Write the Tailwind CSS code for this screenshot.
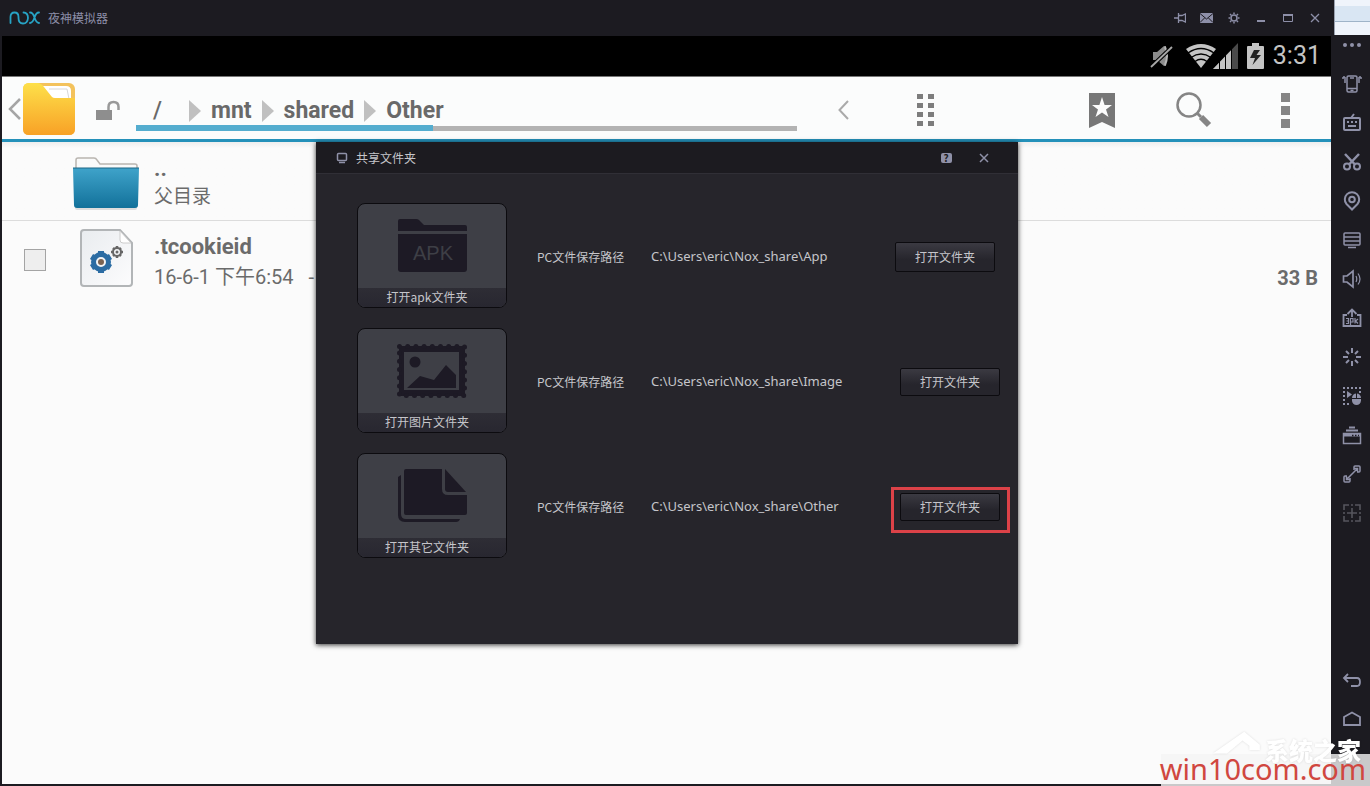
<!DOCTYPE html>
<html lang="zh-CN">
<head>
<meta charset="utf-8">
<meta name="viewport" content="width=device-width, initial-scale=1">
<title>夜神模拟器</title>
<script src="https://cdn.jsdelivr.net/npm/@tailwindcss/browser@4"></script>
</head>
<body class="bg-[#1c1b21] font-['Roboto','Noto_Sans_CJK_SC',sans-serif]">
<div class="relative flex h-screen flex-col overflow-hidden">

  <!-- Emulator title bar -->
  <header class="flex h-9 shrink-0">
    <div class="flex flex-1 items-center bg-[#1c1b21] pl-[9px] pr-[6px] text-[#8d8fa8]">
      <svg class="h-[14px] w-8" viewBox="0 0 32 14" fill="none" stroke="#27a3c4" stroke-width="1.8" stroke-linecap="round"><path d="M1.500 12V6Q1.500 1.500 5.500 1.500T9.500 6V7Q9.500 12.500 14 12.500T19 7Q19 1.500 14.500 1.500"/><path d="M21 1.500Q24 1.500 25.500 6.500T30 12M30 1.500Q27 1.500 25.500 6.500T21 12"/></svg>
      <h1 class="ml-[7px] font-['Noto_Sans_CJK_SC',sans-serif] text-xs">夜神模拟器</h1>
      <div class="ml-auto flex">
        <button aria-label="置顶" class="flex h-9 w-[27px] items-center justify-center"><svg class="h-3 w-3" viewBox="0 0 12 12" fill="none" stroke="currentColor" stroke-width="1.300"><path d="M0 6H4M4.500 1V11M4.500 3.500H8L11.500 2V10L8 8.500H4.500"/></svg></button>
        <button aria-label="消息" class="flex h-9 w-[27px] items-center justify-center"><svg class="h-[10px] w-[13px]" viewBox="0 0 13 10"><path d="M0 0H13V10H0Z" fill="currentColor"/><path d="M0 .5L6.500 6L13 .5M0 9.500L4.500 5M13 9.500L8.500 5" stroke="#1c1b21" fill="none"/></svg></button>
        <button aria-label="设置" class="flex h-9 w-[27px] items-center justify-center"><svg class="h-3 w-3" viewBox="0 0 12 12" fill="none" stroke="currentColor"><circle cx="6" cy="6" r="3" stroke-width="1.500"/><path stroke-width="1.500" d="M6 .5V2M6 10V11.500M.5 6H2M10 6H11.500M2 2L3.200 3.200M8.800 8.800L10 10M2 10L3.200 8.800M8.800 3.200L10 2"/></svg></button>
        <button aria-label="最小化" class="flex h-9 w-[27px] items-center justify-center"><svg class="h-3 w-3" viewBox="0 0 12 12"><path d="M2 8H10V10H2Z" fill="currentColor"/></svg></button>
        <button aria-label="最大化" class="flex h-9 w-[27px] items-center justify-center"><svg class="h-3 w-3" viewBox="0 0 12 12" fill="none" stroke="currentColor"><path d="M1.500 3V9.500H10.500V3"/><path d="M1 3H11" stroke-width="2"/></svg></button>
        <button aria-label="关闭" class="flex h-9 w-[27px] items-center justify-center"><svg class="h-3 w-3" viewBox="0 0 12 12" stroke="currentColor" stroke-width="1.300"><path d="M2 2L10 10M10 2L2 10"/></svg></button>
      </div>
    </div>
    <div class="flex h-[35px] w-9 flex-col border-l border-gray-400 bg-[#eff4fb]">
      <div class="mt-[6px] h-4 border-b border-[#9fb4c8] bg-[#d9e6f3]"></div>
    </div>
  </header>

  <div class="flex min-h-0 flex-1">
    <main class="mb-[2px] ml-[2px] flex flex-1 flex-col bg-[#fbfbfb]">
      <!-- Android status bar -->
      <div class="flex h-[41px] shrink-0 items-center justify-end border-b border-[#777] bg-black pr-[10px] text-[#c4c4c4]">
        <svg class="h-7 w-6" viewBox="0 0 24 28"><path d="M3 10H7L14 4H16V24H14L7 18H3Z" fill="#8c8c8c"/><path d="M15 5Q19 14 15 23" stroke="#b5b5b5" stroke-width="2" fill="none"/><path d="M1 25L22 5" stroke="#000" stroke-width="4"/><path d="M1 25L22 5" stroke="#a8a8a8" stroke-width="1.800"/></svg>
        <svg class="ml-[11px] h-6 w-8" viewBox="0 0 32 24"><path d="M1 5Q16-5 31 5L16 24Z" fill="currentColor"/><path d="M3 9Q16 0 29 9M6 13.500Q16 6.500 26 13.500M10 17.500Q16 13 22 17.500" fill="none" stroke="#000" stroke-width="1.300"/></svg>
        <svg class="-ml-1 h-[26px] w-[25px]" viewBox="0 0 25 26"><path d="M0 26L25 0V26Z" fill="#4a4a4a"/><path d="M0 26L19 6.200V26Z" fill="currentColor"/><path d="M6.500 18V26M12.500 12V26M18.500 6V26" stroke="#000"/></svg>
        <svg class="ml-[9px] h-[26px] w-[17px]" viewBox="0 0 17 26"><path d="M5 0H12V3H16Q17 3 17 4V25Q17 26 16 26H1Q0 26 0 25V4Q0 3 1 3H5Z" fill="currentColor"/><path d="M7 7L3 15H8L5.500 22L14 12H9.500L13 7Z" fill="#222"/></svg>
        <time class="ml-[9px] text-[25px] leading-8">3:31</time>
      </div>

      <!-- File manager toolbar -->
      <div class="flex h-[65px] shrink-0 border-b-3 border-[#2491ba] bg-[#fbfcfc] text-[#7d7d7d]">
        <button aria-label="返回" class="flex w-[76px] shrink-0 items-center pl-[6px] pt-px">
          <svg class="h-6 w-[13px]" viewBox="0 0 13 24" fill="none" stroke="#a5a5a5" stroke-width="2.500"><path d="M12 2L2 12L12 22"/></svg>
          <svg class="ml-px h-[54px] w-[54px]" viewBox="0 0 54 54"><defs><linearGradient id="gold" x1="0" y1="0" x2="0" y2="1"><stop offset="0" stop-color="#fde04a"/><stop offset="1" stop-color="#f8a126"/></linearGradient></defs><rect x="1" y="1" width="52" height="52" rx="6" fill="#f3c25c"/><path d="M20 4H44Q49 4 49 9V18H20Z" fill="#fff"/><path d="M27 7H45L47 17" fill="none" stroke="#d8d8d8"/><path d="M1 7Q1 1 7 1H15Q19 1 22 5L30 15Q31 16 33 16H53V47Q53 53 47 53H7Q1 53 1 47Z" fill="url(#gold)"/></svg>
        </button>
        <button aria-label="解锁" class="flex w-[58px] shrink-0 items-center pl-[17px] pt-1"><svg class="h-[22px] w-[26px]" viewBox="0 0 26 22"><path d="M1 11H17V21H1Z" fill="#8e8e8e"/><path d="M13.500 11V8Q13.500 3 18.500 3T23.500 8V11" fill="none" stroke="#999" stroke-width="2.500"/></svg></button>
        <nav aria-label="路径" class="mb-2 flex min-w-0 flex-1 flex-col">
          <div class="flex flex-1 items-center pt-[19px] pl-[17px] text-[23px] leading-7 font-bold text-[#696969]">
            <a href="#" class="w-[36px] font-medium">/</a>
            <svg class="mr-[10px] h-6 w-3" viewBox="0 0 12 24"><path d="M0 1L12 12L0 23Z" fill="#c0c0c0"/></svg>
            <a href="#">mnt</a>
            <svg class="mx-[10px] h-6 w-3" viewBox="0 0 12 24"><path d="M0 1L12 12L0 23Z" fill="#c0c0c0"/></svg>
            <a href="#">shared</a>
            <svg class="mx-[10px] h-6 w-3" viewBox="0 0 12 24"><path d="M0 1L12 12L0 23Z" fill="#c0c0c0"/></svg>
            <a href="#">Other</a>
          </div>
          <div class="flex h-[6px] items-end"><div class="h-[6px] w-[45%] bg-[#54adcf]"></div><div class="h-[5px] flex-1 bg-[#b3b3b3]"></div></div>
        </nav>
        <button aria-label="上一个" class="flex w-[92px] shrink-0 items-center justify-center"><svg class="mt-1 h-5 w-[11px]" viewBox="0 0 11 20" fill="none" stroke="#aaa" stroke-width="2"><path d="M10 1L1.500 10L10 19"/></svg></button>
        <button aria-label="网格" class="flex w-[72px] shrink-0 items-center justify-center"><svg class="mt-1 h-8 w-[17px]" viewBox="0 0 17 32" fill="currentColor"><path d="M0 0H6V5H0ZM11 0H17V5H11ZM0 9H6V14H0ZM11 9H17V14H11ZM0 18H6V23H0ZM11 18H17V23H11ZM0 27H6V32H0ZM11 27H17V32H11Z"/></svg></button>
        <div class="w-[95px] shrink-0"></div>
        <button aria-label="书签" class="flex w-[92px] shrink-0 items-center justify-center"><svg class="mt-1 h-[35px] w-[26px]" viewBox="0 0 26 35"><path d="M0 0H26V35L13 29L0 35Z" fill="#777"/><path d="M13 4L15.600 12H23L17 16.500L19.500 24L13 19.500L6.500 24L9 16.500L3 12H10.400Z" fill="#fcfcfc"/></svg></button>
        <button aria-label="搜索" class="flex w-[92px] shrink-0 items-center justify-center"><svg class="mt-1 h-9 w-9" viewBox="0 0 36 36" fill="none" stroke="#858585"><circle cx="13" cy="13" r="11.500" stroke-width="2.500"/><path d="M21 21L25 25" stroke-width="3"/><path d="M25 25L33 33" stroke-width="6"/></svg></button>
        <button aria-label="更多" class="flex w-[91px] shrink-0 items-center justify-center"><svg class="mt-1 h-[35px] w-[9px]" viewBox="0 0 9 35" fill="#858585"><path d="M0 0H9V9H0ZM0 13H9V22H0ZM0 26H9V35H0Z"/></svg></button>
      </div>

      <!-- File list -->
      <ul class="text-[#6b6b6b]">
        <li class="flex h-[79px] items-start border-b border-[#dcdcdc] bg-linear-to-b from-[#eeeeee] to-[#fbfbfb] to-8%">
          <svg class="mt-[15px] ml-[70px] h-[54px] w-[68px] shrink-0" viewBox="0 0 68 54"><defs><linearGradient id="blue" x1="0" y1="0" x2="0" y2="1"><stop offset="0" stop-color="#3fa3ca"/><stop offset="1" stop-color="#12719a"/></linearGradient></defs><path d="M4 14V3Q4 1 6 1H22Q24 1 25 3L28 7H63Q65 7 65 9V14Z" fill="#fafafa" stroke="#b9b5b0" stroke-width="1.500"/><rect x="3" y="48" width="62" height="5" rx="2" fill="#ddd"/><path d="M1 11H67L66 48Q66 51 63 51H5Q2 51 2 48Z" fill="url(#blue)"/><path d="M1 11H67" stroke="#1c6685"/></svg>
          <div class="ml-[14px] mt-[13px]">
            <p class="text-[22px] leading-7 font-bold">..</p>
            <p class="text-[19px] leading-7">父目录</p>
          </div>
        </li>
        <li class="flex h-20 items-start">
          <input type="checkbox" aria-label="选择 .tcookieid" class="mt-7 ml-[22px] size-[22px] shrink-0 appearance-none border border-[#a4a4a4] bg-[#eee]">
          <svg class="mt-2 ml-[34px] h-[58px] w-[54px] shrink-0" viewBox="0 0 54 58"><defs><linearGradient id="paper" x1="0" y1="0" x2="1" y2="1"><stop offset="0" stop-color="#e9ecef"/><stop offset="1" stop-color="#fcfcfd"/></linearGradient></defs><path d="M4 1H40L52 14V54Q52 57 49 57H4Q1 57 1 54V4Q1 1 4 1Z" fill="url(#paper)" stroke="#b2b5b7" stroke-width="2"/><path d="M40 2V11Q40 14 43 14H51Z" fill="#fff" stroke="#ccc"/><g stroke="#2b6ca3"><circle cx="21" cy="33" r="7.500" fill="none" stroke-width="5"/><path stroke-width="6" d="M21 22V25M21 41V44M11.500 27.500L14 29M28 37L30.500 38.500M11.500 38.500L14 37M28 29L30.500 27.500"/></g><circle cx="21" cy="33" r="3" fill="#7a6352"/><g stroke="#666" fill="none"><circle cx="37" cy="23" r="4" stroke-width="2"/><path stroke-width="2.500" d="M37 17V19M37 27V29M31 23H33M41 23H43M33 19L34.500 20.500M39.500 25.500L41 27M33 27L34.500 25.500M39.500 20.500L41 19"/></g><circle cx="37" cy="23" r="1.500" fill="#666"/></svg>
          <div class="ml-[20px] mt-3">
            <p class="text-[22px] leading-7 font-bold">.tcookieid</p>
            <p class="mt-[2px] text-xl leading-7 whitespace-pre">16-6-1 下午6:54   -</p>
          </div>
          <span class="mt-[43px] mr-[13px] ml-auto text-xl leading-7 font-bold">33 B</span>
        </li>
      </ul>
    </main>

    <!-- Side toolbar -->
    <aside class="flex w-[39px] shrink-0 flex-col bg-[#1c1b21] pl-[2px] text-[#8f91a8]">
      <button aria-label="更多" class="flex h-7 items-start justify-center pt-[7px]"><svg class="h-1 w-[18px]" viewBox="0 0 18 4" fill="currentColor"><circle cx="2" cy="2" r="2"/><circle cx="9" cy="2" r="2"/><circle cx="16" cy="2" r="2"/></svg></button>
      <button aria-label="摇一摇" class="flex h-[39px] items-center justify-center"><svg class="size-5" viewBox="0 0 20 20" fill="none" stroke="currentColor" stroke-width="1.500"><rect x="5" y="2" width="10" height="16" rx="1.500"/><path d="M5 14.500H15M8 4H12M8.500 16.500H11.500M3 3V9M17 3V9M1 3V5M19 3V5M1 3H3M17 3H19"/></svg></button>
      <button aria-label="键盘" class="flex h-[39px] items-center justify-center"><svg class="size-5" viewBox="0 0 20 20" fill="none" stroke="currentColor" stroke-width="2"><rect x="2" y="5" width="16" height="12" rx="1"/><path d="M9 5L12 1M5 9H7M9 9H11M13 9H15M6 13H14"/></svg></button>
      <button aria-label="剪切" class="flex h-[39px] items-center justify-center"><svg class="size-5" viewBox="0 0 20 20" fill="none" stroke="currentColor" stroke-width="2"><circle cx="5" cy="14.500" r="3"/><circle cx="15" cy="14.500" r="3"/><path d="M3 2L12.500 12M17 2L7.500 12" stroke-width="2.500"/></svg></button>
      <button aria-label="定位" class="flex h-[39px] items-center justify-center"><svg class="size-5" viewBox="0 0 20 20" fill="none" stroke="currentColor" stroke-width="2"><path d="M10 18.500L4.500 13A7.200 7.200 0 1 1 15.500 13Z"/><circle cx="10" cy="8.500" r="2.800"/></svg></button>
      <button aria-label="显示" class="flex h-[39px] items-center justify-center"><svg class="size-5" viewBox="0 0 20 20" fill="none" stroke="currentColor" stroke-width="1.500"><rect x="2" y="3" width="16" height="12" rx="1"/><path d="M2 7H18M2 11H18M6 17.500H14"/></svg></button>
      <button aria-label="音量" class="flex h-[39px] items-center justify-center"><svg class="size-5" viewBox="0 0 20 20" fill="none" stroke="currentColor" stroke-width="1.700"><path d="M1.500 7H5L11 2V18L5 13H1.500Z"/><path d="M14 7Q15.500 10 14 13M16 4.500Q20 10 16 15.500" stroke-width="1.200"/></svg></button>
      <button aria-label="安装 apk" class="flex h-[39px] items-center justify-center"><svg class="size-5" viewBox="0 0 20 20" fill="none" stroke="currentColor" stroke-width="1.800"><path d="M5 7H1.500V18H18.500V7H15M10 9V2M5.500 6L10 1.500L14.500 6"/><path stroke-width="1.200" d="M4 10.500H6.500V15.500H4M4.500 13H6.500M8.500 17V10.500H11V14H8.500M13 10V15.500M16 11L13.500 13L16 15.500"/></svg></button>
      <button aria-label="加载" class="flex h-[39px] items-center justify-center"><svg class="size-5" viewBox="0 0 20 20" stroke="currentColor" stroke-width="2"><path d="M10 1V6M10 14V19M1 10H6M14 10H19M4 4L7 7M13 13L16 16M4 16L7 13M13 7L16 4"/></svg></button>
      <button aria-label="录制脚本" class="flex h-[39px] items-center justify-center"><svg class="size-5" viewBox="0 0 20 20"><path d="M1 2H19M2 5V19M5 18H8M18 5V8" fill="none" stroke="currentColor" stroke-width="2" stroke-dasharray="2 2"/><path d="M5 5L10 8.500L5 12Z" fill="currentColor"/><path d="M10 12A4.500 4.500 0 0 1 19 12V14.500A4.500 4.500 0 0 1 10 14.500Z" fill="currentColor"/><path d="M10 12.500H19M14.500 7V12.500" stroke="#1c1b21"/></svg></button>
      <button aria-label="多开" class="flex h-[39px] items-center justify-center"><svg class="size-5" viewBox="0 0 20 20" fill="none" stroke="currentColor" stroke-width="1.500"><rect x="1.500" y="8.500" width="17" height="10"/><path d="M2 10H18" stroke-width="3"/><path d="M4 5.500H16M7 2.500H13" stroke-width="1.800"/><path d="M10 10.500H17" stroke="#1c1b21" stroke-dasharray="1.500 1.500"/></svg></button>
      <button aria-label="全屏" class="flex h-[39px] items-center justify-center"><svg class="size-5" viewBox="0 0 20 20" fill="none" stroke="currentColor" stroke-width="1.500"><path d="M12 6V3Q12 2 13 2H17Q18 2 18 3V7Q18 8 17 8H15M8 14V17Q8 18 7 18H3Q2 18 2 17V13Q2 12 3 12H5M4.500 15.500L15.500 4.500M12.500 4.500H15.500V7.500M4.500 12.500V15.500H7.500"/></svg></button>
      <button aria-label="添加" class="flex h-[39px] items-center justify-center text-[#55555d]"><svg class="size-5" viewBox="0 0 20 20" fill="none" stroke="currentColor" stroke-width="1.600"><path d="M2 7V2H7M13 2H18V7M18 13V18H13M7 18H2V13M9 2H11M9 18H11M2 9V11M18 9V11M10 5V15M5 10H15"/></svg></button>
      <div class="flex-1"></div>
      <button aria-label="后退" class="flex h-[39px] items-center justify-center"><svg class="size-5" viewBox="0 0 20 20" fill="none" stroke="currentColor" stroke-width="1.800"><path d="M6 4L2 8L6 12M2 8H15Q18 8 18 12T15 16H9"/></svg></button>
      <button aria-label="主页" class="mb-12 flex h-[39px] items-center justify-center"><svg class="size-5" viewBox="0 0 20 20" fill="none" stroke="currentColor" stroke-width="1.800"><path d="M2 16V8L10 3.500L18 8V16Z"/></svg></button>
    </aside>
  </div>

  <!-- Shared folder window, floating over the emulator screen -->
  <section role="dialog" aria-labelledby="dlg" class="absolute top-[142px] left-[316px] h-[502px] w-[702px] bg-[#26252b] font-['Noto_Sans_CJK_SC',sans-serif] text-xs text-[#c5c5ca] shadow-[0_1px_5px_rgba(0,0,0,0.8)]">
    <div class="flex h-8 items-center border-b border-[#302f36] bg-[#1c1b20] pr-5 pl-[20px]">
      <svg class="h-3 w-3" viewBox="0 0 12 12" fill="none" stroke="#8f91a8" stroke-width="1.500"><rect x="1.500" y="1.500" width="9" height="7" rx="1"/><path d="M3 10.500H9"/></svg>
      <h2 id="dlg" class="ml-2">共享文件夹</h2>
      <button aria-label="帮助" class="ml-auto flex h-8 w-[38px] items-center justify-center"><span class="flex h-[10px] w-[11px] items-center justify-center rounded-[2px] bg-[#8f91a8] text-[10px] leading-none font-bold text-[#1c1b20]">?</span></button>
      <button aria-label="关闭" class="-mr-[5px] flex h-8 w-[38px] items-center justify-center"><svg class="h-3 w-3" viewBox="0 0 12 12" stroke="#8f91a8" stroke-width="1.500"><path d="M2 2L10 10M10 2L2 10"/></svg></button>
    </div>
    <div class="flex flex-col gap-5 pt-[29px] pr-[18px] pl-[41px]">
      <div class="flex items-center">
        <button class="flex h-[105px] w-[150px] flex-col overflow-hidden rounded-lg border border-[#0c0b0f] bg-[#3e3f46]">
          <span class="flex w-full flex-1 items-center justify-center"><svg class="h-[54px] w-[70px]" viewBox="0 0 70 54" fill="#1d1a25"><path d="M1 12V2Q1 0 3 0H19Q21 0 22 1L27 6H68Q70 6 70 8V12Z"/><path d="M1 15H70V50Q70 53 67 53H4Q1 53 1 50Z"/><text x="36" y="41" text-anchor="middle" font-family="Liberation Sans, sans-serif" font-size="20" fill="#3e3f46">APK</text></svg></span>
          <span class="h-[19px] w-full bg-linear-to-b from-[#2e2d35] to-[#282730] pr-[10px] leading-[18px]">打开apk文件夹</span>
        </button>
        <div class="flex flex-1 items-center pt-[2px] pl-[30px]">
          <span class="w-[114px]">PC文件保存路径</span>
          <span class="font-['Noto_Sans',sans-serif] text-[13px]">C:\Users\eric\Nox_share\App</span>
          <button class="mr-[5px] ml-auto h-[30px] w-[100px] rounded-[2px] border border-[#0c0b0f] bg-linear-to-b from-[#3b3a42] to-[#26252c] to-60%">打开文件夹</button>
        </div>
      </div>
      <div class="flex items-center">
        <button class="flex h-[105px] w-[150px] flex-col overflow-hidden rounded-lg border border-[#0c0b0f] bg-[#3e3f46]">
          <span class="flex w-full flex-1 items-center justify-center"><svg class="h-[54px] w-[70px]" viewBox="0 0 70 54"><path d="M2 2H68V52H2Z" fill="#1d1a25"/><path d="M2.500 2.500H67.500V51.500H2.500Z" fill="none" stroke="#1d1a25" stroke-width="5" stroke-linecap="round" stroke-dasharray="0 8.200"/><path d="M7 8H62V46H7Z" fill="#3e3f46"/><circle cx="18" cy="18" r="5.500" fill="#1d1a25"/><path d="M10 44L23 32L37 36L49 21L59 31V44Z" fill="#1d1a25"/></svg></span>
          <span class="h-[19px] w-full bg-linear-to-b from-[#2e2d35] to-[#282730] pr-[10px] leading-[18px]">打开图片文件夹</span>
        </button>
        <div class="flex flex-1 items-center pt-[2px] pl-[30px]">
          <span class="w-[114px]">PC文件保存路径</span>
          <span class="font-['Noto_Sans',sans-serif] text-[13px]">C:\Users\eric\Nox_share\Image</span>
          <button class="ml-auto h-7 w-[100px] rounded-[2px] border border-[#0c0b0f] bg-linear-to-b from-[#3b3a42] to-[#26252c] to-60%">打开文件夹</button>
        </div>
      </div>
      <div class="flex items-center">
        <button class="flex h-[105px] w-[150px] flex-col overflow-hidden rounded-lg border border-[#0c0b0f] bg-[#3e3f46]">
          <span class="flex w-full flex-1 items-center justify-center"><svg class="h-[54px] w-[70px]" viewBox="0 0 70 54" fill="#1d1a25"><path d="M9 0H45V20Q45 26 51 26H70V44Q70 46 68 46H9Q7 46 7 44V2Q7 0 9 0Z"/><path d="M48 0L69 23H51Q48 23 48 20Z"/><path d="M4 6L1 8V46Q1 53 8 53H59Q62 53 63 50H9Q4 50 4 45Z"/></svg></span>
          <span class="h-[19px] w-full bg-linear-to-b from-[#2e2d35] to-[#282730] pr-[10px] leading-[18px]">打开其它文件夹</span>
        </button>
        <div class="flex flex-1 items-center pt-[2px] pl-[30px]">
          <span class="w-[114px]">PC文件保存路径</span>
          <span class="font-['Noto_Sans',sans-serif] text-[13px]">C:\Users\eric\Nox_share\Other</span>
          <div class="relative ml-auto">
            <button class="h-7 w-[100px] rounded-[2px] border border-[#0c0b0f] bg-linear-to-b from-[#3b3a42] to-[#26252c] to-60%">打开文件夹</button>
            <div class="pointer-events-none absolute -top-[6px] -right-[10px] h-[46px] w-[119px] border-3 border-[#dc4248]"></div>
          </div>
        </div>
      </div>
    </div>
  </section>

  <!-- Site watermark -->
  <div class="pointer-events-none absolute right-0 bottom-0 w-[209px]">
    <div class="h-8 bg-[#f5f5f5]/80"></div>
    <div class="absolute right-[9px] bottom-5 flex items-end text-white drop-shadow-[0_0_1px_rgba(0,0,0,0.12)]">
      <svg class="mb-2 h-7 w-[52px]" viewBox="0 0 60 28"><path d="M0 25L36 0L54 15V21H42V16L34 10L16 25Z" fill="#fff"/></svg>
      <span class="font-['Noto_Sans_CJK_SC',sans-serif] text-2xl leading-8 font-black">系统之家</span>
    </div>
    <p class="absolute right-1 bottom-[2px] font-['Noto_Sans',sans-serif] text-[29px] leading-[30px] whitespace-nowrap text-[#d0473f]">win10com.com</p>
  </div>
</div>
</body>
</html>
